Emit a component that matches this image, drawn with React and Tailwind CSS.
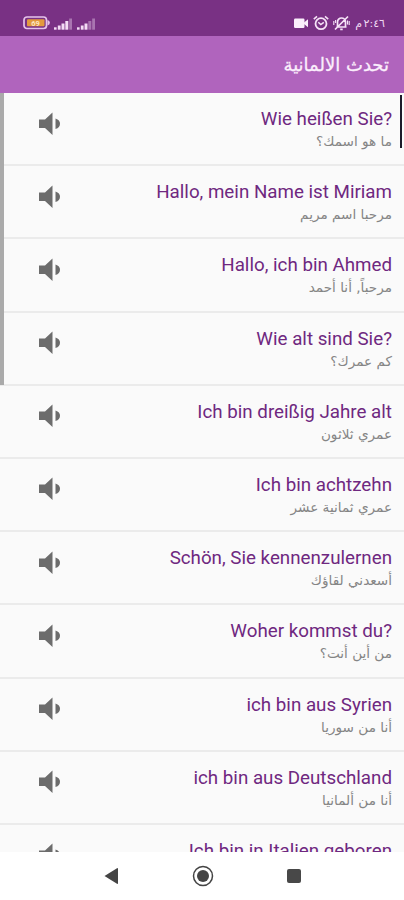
import React from 'react';

const phrases = [
    { de: 'Wie heißen Sie?', ar: 'ما هو اسمك؟' },
    { de: 'Hallo, mein Name ist Miriam', ar: 'مرحبا اسم مريم' },
    { de: 'Hallo, ich bin Ahmed', ar: 'مرحباً, أنا أحمد' },
    { de: 'Wie alt sind Sie?', ar: 'كم عمرك؟' },
    { de: 'Ich bin dreißig Jahre alt', ar: 'عمري ثلاثون' },
    { de: 'Ich bin achtzehn', ar: 'عمري ثمانية عشر' },
    { de: 'Schön, Sie kennenzulernen', ar: 'أسعدني لقاؤك' },
    { de: 'Woher kommst du?', ar: 'من أين أنت؟' },
    { de: 'ich bin aus Syrien', ar: 'أنا من سوريا' },
    { de: 'ich bin aus Deutschland', ar: 'أنا من ألمانيا' },
    { de: 'Ich bin in Italien geboren' },
];

function Signal({ full }) {
    return (
        <svg width="19" height="12" viewBox="0 0 19 12" fill="#f3dcf5">
            <rect x="0" y="9.3" width="2.6" height="2.4" />
            <rect x="3.8" y="7.5" width="2.8" height="4.2" />
            <rect x="7.5" y="5.5" width="3" height="6.2" />
            <rect x="11.3" y="3" width="3" height="8.7" opacity={full ? 1 : 0.4} />
            <rect x="15.2" y="0.5" width="2.8" height="11.2" opacity="0.4" />
        </svg>
    );
}

function StatusBar() {
    return (
        <div className="flex h-[36px] shrink-0 items-start justify-between bg-[#793184] pl-[23px] pr-[19px] pt-[15px]">
            <div className="flex items-end">
                <svg width="27" height="15" viewBox="0 0 27 15">
                    <rect x="1" y="2" width="22.5" height="11.5" rx="3" fill="none" stroke="#e6c3ea" strokeWidth="1.7" />
                    <rect x="4" y="4.3" width="17.5" height="7" rx="1" fill="#e39a3d" />
                    <path d="M24.5 5v5.5q2.4-.6 2.4-2.75T24.5 5z" fill="#e6c3ea" />
                    <text x="12.5" y="10.6" textAnchor="middle" fontSize="7.5" fontWeight="700" fill="#fbe3c0" fontFamily="Roboto, sans-serif">69</text>
                </svg>
                <span className="ml-[4px]"><Signal full /></span>
                <span className="ml-[4px]"><Signal /></span>
            </div>
            <div className="flex items-center">
                <svg width="15" height="12" viewBox="0 0 15 12" fill="#fbeffc">
                    <rect x="0" y="1.5" width="10.5" height="9.5" rx="1.2" />
                    <path d="M10 5.5L14 2.3v7.9L10 7z" />
                </svg>
                <svg className="ml-[4px]" width="16" height="16" viewBox="0 0 16 16" fill="none" stroke="#f5e3f7">
                    <circle cx="8" cy="8.7" r="5.5" strokeWidth="1.8" />
                    <path d="M.8 4.2L4 1.4M15.2 4.2L12 1.4" strokeWidth="1.6" />
                    <path d="M5.3 7.3L7.8 9.6L10.8 7.3" strokeWidth="1.5" />
                </svg>
                <svg className="ml-[4px]" width="17" height="16" viewBox="0 0 17 16" fill="none" stroke="#f5e3f7" strokeWidth="1.7">
                    <path d="M4.5 12V7a4 4 0 0 1 8 0v5zM3.5 12h10M7.2 14.3h2.5M2 14.5L15 1.5" />
                    <path d="M.8 6v4M2.6 5v3M16.2 6v4M14.5 5.5v4" strokeWidth="1.1" />
                </svg>
                <span dir="rtl" className="ml-[2px] w-[33px] whitespace-nowrap font-['DejaVu_Sans',sans-serif] text-[11px] leading-[15px] text-[#f0d9f3] [word-spacing:-2px]">٢:٤٦ م</span>
            </div>
        </div>
    );
}

function Speaker() {
    return (
        <svg width="22" height="24" viewBox="0 0 22 24" fill="#6c6c6c">
            <path d="M0 7.5h6L13.5 0.5v22.5L6 16H0z" />
            <path d="M16.5 6.5q4.5 1.5 4.5 5.3t-4.5 5.3z" />
        </svg>
    );
}

function PhraseRow({ phrase }) {
    return (
        <li className="flex h-[73.2px] shrink-0 items-start justify-between border-b-2 border-[#ebebeb] pl-[39px] pr-[12px]">
            <div className="pt-[18.5px]">
                <Speaker />
            </div>
            <div className="text-right">
                <p className="mt-[14px] whitespace-nowrap text-[18.75px] leading-[25px] text-[#6f2880]">{phrase.de}</p>
                {phrase.ar && (
                    <p dir="rtl" className="-mt-px whitespace-nowrap font-['DejaVu_Sans',sans-serif] text-[13.6px] leading-[20px] text-[#858585]">{phrase.ar}</p>
                )}
            </div>
        </li>
    );
}

function NavBar() {
    return (
        <div className="flex h-[48px] shrink-0 items-center bg-white pl-[103.5px]">
            <svg width="15" height="18" viewBox="0 0 15 18" fill="#444444">
                <path d="M.5 9L13 1.2q1-.4 1 .6v14.4q0 1-1 .6z" />
            </svg>
            <svg className="ml-[73px]" width="22" height="22" viewBox="0 0 22 22">
                <circle cx="11" cy="11" r="9.5" fill="none" stroke="#444444" strokeWidth="1.5" />
                <circle cx="11" cy="11" r="6" fill="#444444" />
            </svg>
            <div className="ml-[73px] h-[14px] w-[14px] rounded-[2px] bg-[#484848]" />
        </div>
    );
}

function App() {
    return (
        <div className="flex h-[900px] w-[404px] flex-col overflow-hidden bg-[#fafafa] font-['Roboto',sans-serif]">
            <StatusBar />
            <header className="flex h-[57px] shrink-0 items-center justify-end bg-[#b064bd] pr-[15px]">
                <h1 dir="rtl" className="whitespace-nowrap font-['DejaVu_Sans',sans-serif] text-[18px] leading-[28px] text-[#fbeefc] [-webkit-text-stroke:0.3px_#fbeefc]">تحدث الالمانية</h1>
            </header>
            <main className="relative h-[759px] shrink-0 overflow-hidden">
                <ul className="flex flex-col">
                    {phrases.map((phrase) => (
                        <PhraseRow key={phrase.de} phrase={phrase} />
                    ))}
                </ul>
                {/* scrollbars */}
                <div className="absolute left-0 top-0 h-[292px] w-[4px] bg-[#aaaaaa]" />
                <div className="absolute right-[2px] top-[2px] h-[53px] w-[2px] bg-[#1d1b2b]" />
            </main>
            <NavBar />
        </div>
    );
}

export default App;
